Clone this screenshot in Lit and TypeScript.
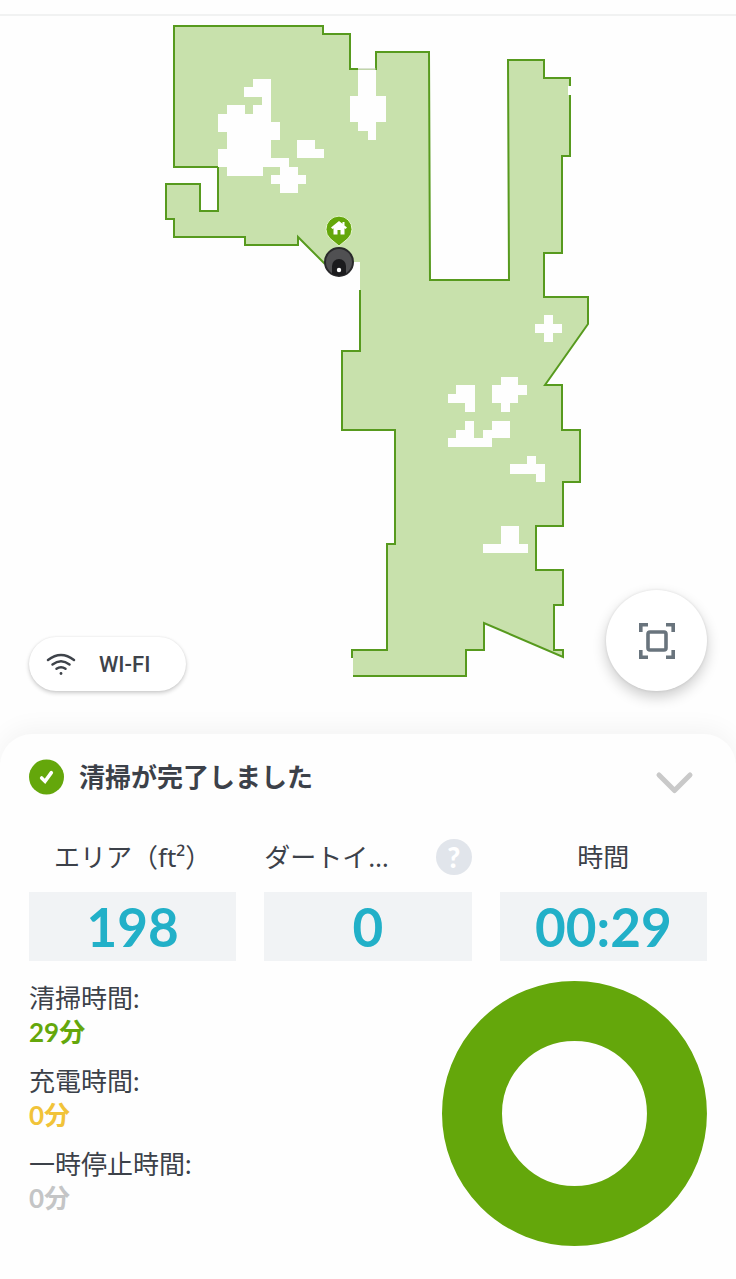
import { LitElement, html, css, svg } from "lit";
import { customElement, property } from "lit/decorators.js";

const FLOOR =
  "M174 26H323V34H350V69H376V52H429L430 280H509L508 60H544V78H570V156H562V253H544V297H588V324L545 385H562V430H580V482H563V526H536V570H563V605H554V650H563V657L484 623V650H466V676H353V650H387V544H395V430H342V351H360V262H324L298 237V245H245V237H174V219H166V184H200V211H218V167H174Z";

const WALLS = [
  "M350 69V34H323V26H174V167H218V211H200V184H166V219H174V237H245V245H298V237L325 264",
  "M349 69H358",
  "M376 70V52H429L430 280H509L508 60H544V78H570V86",
  "M570 95V156H562V253H544V297H588V324L545 385H562V430H580V482H563V526H536V570H563V605H554V650H563V657L484 623V650H466V676H353",
  "M352 658V650H387V544H395V430H342V351H360V290",
];

const OBSTACLES = [
  "M253 79H271V122H280V140H271V158H289V167H298V175H306V184H298V193H280V184H271V175H280V167H263V176H227V167H218V149H227V132H218V114H227V105H245V114H253V105H262V97H244V87H253Z",
  "M297 140H315V149H324V158H297Z",
  "M358 70H376V96H386V122H376V140H368V131H358V122H350V96H358Z",
  "M544 315H553V324H562V333H553V342H544V333H535V324H544Z",
  "M501 377H518V385H527V395H518V403H510V412H501V403H492V385H501Z",
  "M456 385H475V412H465V403H448V394H456Z",
  "M465 421H474V438H483V430H492V421H510V438H492V447H448V438H456V430H465Z",
  "M527 456H536V464H545V482H536V474H510V464H527Z",
  "M501 526H519V544H528V553H483V544H501Z",
  "M568 86H572V95H568Z",
];

@customElement("floor-map")
class FloorMap extends LitElement {
  static styles = css`
    :host {
      display: block;
      position: relative;
    }
    .map {
      display: block;
      width: 100%;
      height: auto;
    }
    .floor {
      fill: #c8e1ac;
    }
    .wall {
      fill: none;
      stroke: #579a1e;
      stroke-width: 2;
    }
    .clear {
      fill: #fefefe;
    }
    .edge {
      stroke: #b9c9a8;
      stroke-width: 1;
    }
    .controls {
      position: absolute;
      inset: auto 29px 43px;
      display: flex;
      justify-content: space-between;
      align-items: flex-end;
    }
    .wifi,
    .fit {
      display: flex;
      align-items: center;
      border: 0;
      background: #fff;
      cursor: pointer;
    }
    .wifi {
      height: 54px;
      gap: 22px;
      padding: 2px 36px 0 16px;
      border-radius: 27px;
      font: 500 22px/28px Roboto, sans-serif;
      color: #3e434a;
      box-shadow: 0 2px 4px rgba(0, 0, 0, 0.2), 0 0 2px rgba(0, 0, 0, 0.08);
    }
    .fit {
      width: 101px;
      height: 101px;
      justify-content: center;
      padding: 0;
      border-radius: 50%;
      box-shadow: 0 6px 14px rgba(0, 0, 0, 0.2), 0 0 3px rgba(0, 0, 0, 0.1);
    }
  `;

  render() {
    return html`
      <svg class="map" viewBox="0 16 736 718" role="img" aria-label="清掃マップ">
        <path class="floor" d=${FLOOR} />
        ${WALLS.map((d) => svg`<path class="wall" d=${d} />`)}
        ${OBSTACLES.map((d) => svg`<path class="clear" d=${d} />`)}
        <path class="edge" d="M358 69H376" />
        <circle cx="339" cy="262" r="14" fill="#505052" stroke="#29292b" stroke-width="2" />
        <path d="M332 274V266A7 7 0 0 1 346 266V274Q339 277 332 274Z" fill="#1b1b1d" />
        <circle cx="339" cy="270" r="2.2" fill="#fff" />
        <path
          d="M339 246L330 238.500A13 13 0 1 1 348 238.500Z"
          fill="#64a70b"
          stroke="#e4f5cc"
          stroke-width="1"
        />
        <path
          d="M339 221L331 227.500L332.500 229L333.500 228.300V234.500H337.500V230H340.500V234.500H344.500V228.300L345.500 229L347 227.500L344.500 225.500V222H342.500V223.800Z"
          fill="#fff"
        />
      </svg>
      <div class="controls">
        <button class="wifi" type="button">
          <svg width="32" height="26" viewBox="0 0 32 26" fill="none" stroke="#3e434a" stroke-width="2.400" stroke-linecap="round" aria-hidden="true">
            <path d="M3 8Q16 -2 29 8M7.500 12.500Q16 6 24.500 12.500M11.500 16.800Q16 13.500 20.500 16.800" />
            <circle cx="16" cy="21.500" r="1.400" fill="#3e434a" stroke="none" />
          </svg>
          WI-FI
        </button>
        <button class="fit" type="button" aria-label="全体表示">
          <svg width="36" height="36" viewBox="0 0 36 36" fill="none" stroke="#69747d" aria-hidden="true">
            <path stroke-width="3.600" d="M1.800 9V1.800H9M27 1.800H34.200V9M34.200 27V34.200H27M9 34.200H1.800V27" />
            <rect stroke-width="3.600" x="9" y="9" width="18" height="18" rx="2" />
          </svg>
        </button>
      </div>
    `;
  }
}

@customElement("stat-tile")
class StatTile extends LitElement {
  @property() label = "";
  @property() value = "";
  @property({ type: Boolean }) help = false;

  static styles = css`
    :host {
      display: flex;
      flex-direction: column;
      gap: 17px;
      min-width: 0;
    }
    .head {
      display: flex;
      align-items: center;
      justify-content: center;
      height: 36px;
      font-family: "Noto Sans", "Noto Sans CJK JP", sans-serif;
      font-size: 26px;
      line-height: 32px;
      white-space: nowrap;
    }
    .split {
      justify-content: space-between;
    }
    .help {
      width: 36px;
      height: 36px;
      flex: none;
      padding: 0;
      border: 0;
      border-radius: 50%;
      background: #e1e5eb;
      color: #fff;
      font: 900 28px/36px Lato, sans-serif;
      cursor: pointer;
    }
    .value {
      height: 69px;
      background: #f1f3f5;
      color: #22b0c8;
      font-size: 53px;
      font-weight: 700;
      line-height: 69px;
      text-align: center;
    }
  `;

  render() {
    return html`
      <div class="head ${this.help ? "split" : ""}">
        <span>${this.label}</span>
        ${this.help ? html`<button class="help" type="button" aria-label="ヘルプ">?</button>` : ""}
      </div>
      <div class="value">${this.value}</div>
    `;
  }
}

@customElement("app-root")
class AppRoot extends LitElement {
  static styles = css`
    :host {
      display: flex;
      flex-direction: column;
      min-height: 100vh;
      overflow: hidden;
      background: #fefefe;
      color: #3c4149;
      font-family: Lato, "Noto Sans CJK JP", sans-serif;
    }
    .topbar {
      height: 14px;
      border-bottom: 2px solid #f1f2f2;
    }
    .panel {
      position: relative;
      flex: 1;
      padding: 25px 29px 32px;
      border-radius: 32px 32px 0 0;
      background: #fefefe;
      box-shadow: 0 -4px 26px rgba(0, 0, 0, 0.05);
    }
    .status {
      display: flex;
      align-items: center;
      gap: 15px;
      height: 36px;
      margin-bottom: 44px;
    }
    .title {
      flex: 1;
      margin: 0;
      font-size: 26px;
      line-height: 36px;
      font-weight: 700;
    }
    .collapse {
      display: flex;
      padding: 12px 13px 0;
      border: 0;
      background: none;
      cursor: pointer;
    }
    .stats {
      display: grid;
      grid-template-columns: repeat(3, 1fr);
      gap: 28px;
      margin-bottom: 20px;
    }
    .summary {
      display: flex;
      justify-content: space-between;
      align-items: flex-start;
    }
    .times {
      display: flex;
      flex-direction: column;
      gap: 15px;
      margin: 0;
      font-size: 26px;
      line-height: 34px;
    }
    .amount {
      margin: 0;
      font-weight: 700;
    }
    .clean {
      color: #64a70b;
    }
    .charge {
      color: #f1c339;
    }
    .pause {
      color: #c4c5c6;
    }
    .donut {
      width: 36vw;
      max-width: 265px;
      height: auto;
    }
  `;

  private times = [
    { label: "清掃時間:", amount: "29分", tone: "clean" },
    { label: "充電時間:", amount: "0分", tone: "charge" },
    { label: "一時停止時間:", amount: "0分", tone: "pause" },
  ];

  render() {
    return html`
      <header class="topbar"></header>
      <floor-map></floor-map>
      <main class="panel" lang="ja">
        <div class="status">
          <svg width="35" height="36" viewBox="0 0 36 36" aria-hidden="true">
            <circle cx="18" cy="18" r="18" fill="#64a70b" />
            <path d="M13 19L16.500 22.500L23 13.500" fill="none" stroke="#fff" stroke-width="3.600" stroke-linecap="round" />
          </svg>
          <h1 class="title">清掃が完了しました</h1>
          <button class="collapse" type="button" aria-label="閉じる">
            <svg width="39" height="24" viewBox="0 0 39 24" fill="none" stroke="#c9c9c9" stroke-width="5" stroke-linecap="round" stroke-linejoin="round" aria-hidden="true">
              <path d="M4 4L19.500 19.500L35 4" />
            </svg>
          </button>
        </div>
        <section class="stats">
          <stat-tile label="エリア（ft²）" value="198"></stat-tile>
          <stat-tile label="ダートイ…" value="0" help></stat-tile>
          <stat-tile label="時間" value="00:29"></stat-tile>
        </section>
        <section class="summary">
          <dl class="times">
            ${this.times.map(
              (t) => html`<div>
                <dt>${t.label}</dt>
                <dd class="amount ${t.tone}">${t.amount}</dd>
              </div>`
            )}
          </dl>
          <svg class="donut" viewBox="0 0 265 265" role="img" aria-label="清掃時間 29分">
            <circle cx="132.500" cy="132.500" r="102.500" fill="none" stroke="#64a70b" stroke-width="60" />
          </svg>
        </section>
      </main>
    `;
  }
}
